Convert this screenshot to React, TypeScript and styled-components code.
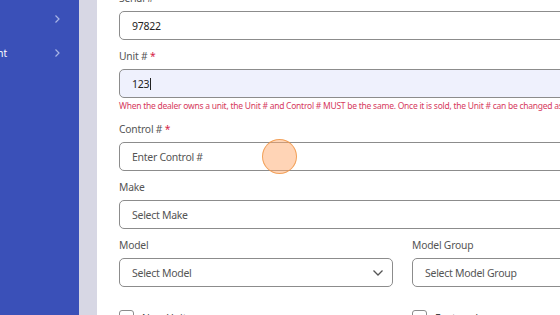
import styled, { createGlobalStyle } from "styled-components";

const Global = createGlobalStyle`
  html, body { margin: 0; padding: 0; }
  body {
    width: 560px;
    height: 315px;
    overflow: hidden;
    font-family: "Noto Sans", "Open Sans", sans-serif;
    background: #fff;
  }
`;

function Chevron({ color }: { color: string }) {
  return (
    <svg width="8" height="10" viewBox="0 0 8 10">
      <path d="M2.5 1.5 L6 5 L2.5 8.5" fill="none" stroke={color} strokeWidth="1.2" />
    </svg>
  );
}

export default function App() {
  return (
    <Page>
      <Global />
      <Sidebar>
        <NavList>
          <NavItem>
            <NavLabel>Inventory</NavLabel>
            <Chevron color="#a9b5e6" />
          </NavItem>
          <NavItem>
            <NavLabel>Management</NavLabel>
            <Chevron color="#a9b5e6" />
          </NavItem>
        </NavList>
      </Sidebar>
      <Gutter />
      <Main>
        <Form>
          <Field>
            <Label>
              Serial # <Req>*</Req>
            </Label>
            <Input>97822</Input>
          </Field>
          <Field>
            <Label>
              Unit # <Req>*</Req>
            </Label>
            <Input $focused>
              123<Caret />
            </Input>
            <Help>
              When the dealer owns a unit, the Unit # and Control # MUST be the same. Once it is sold, the Unit # can be changed as needed.
            </Help>
          </Field>
          <Field>
            <Label>
              Control # <Req>*</Req>
            </Label>
            <Input $placeholder>Enter Control #</Input>
          </Field>
          <Field>
            <Label>Make</Label>
            <Input $placeholder>Select Make</Input>
          </Field>
          <Row>
            <Field>
              <Label>Model</Label>
              <Input $placeholder $select>
                Select Model
                <svg width="12" height="8" viewBox="0 0 12 8">
                  <path d="M1.5 1.5 L6 6 L10.5 1.5" fill="none" stroke="#555" strokeWidth="1.3" />
                </svg>
              </Input>
            </Field>
            <Field>
              <Label>Model Group</Label>
              <Input $placeholder>Select Model Group</Input>
            </Field>
          </Row>
          <Row $checks>
            <Check>
              <Box />
              <span>New Unit</span>
            </Check>
            <Check>
              <Box />
              <span>Featured</span>
            </Check>
          </Row>
        </Form>
        <Cursor />
      </Main>
    </Page>
  );
}

const Page = styled.div`
  display: flex;
  width: 560px;
  height: 315px;
  overflow: hidden;
`;

const Sidebar = styled.nav`
  width: 79px;
  flex: none;
  background: #3a50b8;
  overflow: hidden;
`;

const NavList = styled.ul`
  list-style: none;
  margin: 0 0 0 -56px;
  padding: 8px 0 0;
  width: 135px;
`;

const NavItem = styled.li`
  display: flex;
  align-items: center;
  justify-content: space-between;
  height: 22px;
  padding-right: 18px;
  margin-bottom: 12px;
  color: #fff;
  font-size: 10px;
`;

const NavLabel = styled.span`
  white-space: nowrap;
`;

const Gutter = styled.div`
  width: 18px;
  flex: none;
  background: #d7d7e4;
`;

const Main = styled.main`
  position: relative;
  flex: 1;
  overflow: hidden;
  padding-left: 22px;
`;

const Form = styled.div`
  width: 567px;
  margin-top: -10px;
  display: flex;
  flex-direction: column;
  gap: 8px;
`;

const Field = styled.div`
  display: flex;
  flex-direction: column;
  flex: 1;
`;

const Row = styled.div<{ $checks?: boolean }>`
  display: flex;
  gap: 19px;
  margin-top: ${(p) => (p.$checks ? "15px" : "0")};
`;

const Label = styled.label`
  font-size: 10.3px;
  letter-spacing: -0.2px;
  line-height: 16px;
  color: #555;
  margin-bottom: 5px;
`;

const Req = styled.span`
  color: #d6264a;
`;

const Input = styled.div<{ $focused?: boolean; $placeholder?: boolean; $select?: boolean }>`
  box-sizing: border-box;
  height: 29px;
  display: flex;
  align-items: center;
  justify-content: space-between;
  padding: 0 ${(p) => (p.$select ? "8px" : "13px")} 0 12px;
  border: 1px solid #8c8c8c;
  border-radius: 5px;
  background: ${(p) => (p.$focused ? "#eff1fd" : "#fff")};
  font-size: 10.5px;
  letter-spacing: -0.28px;
  color: ${(p) => (p.$placeholder ? "#555" : "#222")};
`;

const Caret = styled.span`
  display: inline-block;
  width: 1px;
  height: 12px;
  background: #222;
  margin-left: 1px;
  margin-right: auto;
`;

const Help = styled.div`
  margin-top: 1px;
  font-size: 8.5px;
  letter-spacing: -0.25px;
  line-height: 14px;
  color: #d63a5e;
  white-space: nowrap;
`;

const Check = styled.label`
  flex: 1;
  display: flex;
  align-items: center;
  gap: 8px;
  font-size: 10.3px;
  color: #444;
`;

const Box = styled.span`
  box-sizing: border-box;
  width: 15px;
  height: 15px;
  border: 1px solid #8c8c8c;
  border-radius: 3px;
`;

const Cursor = styled.div`
  position: absolute;
  left: 165px;
  top: 139px;
  width: 35px;
  height: 35px;
  border-radius: 50%;
  background: rgba(255, 170, 110, 0.5);
  border: 1.5px solid rgba(240, 150, 70, 0.85);
  box-sizing: border-box;
`;
